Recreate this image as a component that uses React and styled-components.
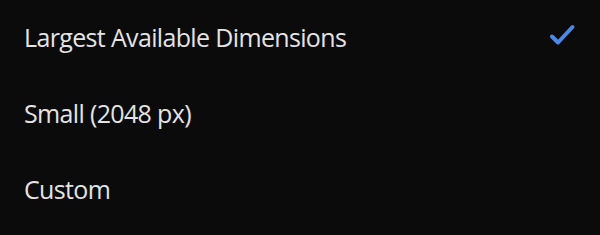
import styled, { createGlobalStyle } from "styled-components";

const Global = createGlobalStyle`
  html, body {
    margin: 0;
    padding: 0;
    background: #0b0b0b;
  }
`;

const Menu = styled.ul`
  list-style: none;
  margin: 0;
  padding: 0;
  width: 600px;
  height: 235px;
  background: #0b0b0b;
  font-family: "Open Sans", "Noto Sans", sans-serif;
`;

const Item = styled.li`
  display: flex;
  align-items: center;
  justify-content: space-between;
  height: 76px;
  padding: 0 24px 2px 24px;
  box-sizing: border-box;
  color: #e3e3e3;
  font-size: 25px;
  letter-spacing: -0.65px;
`;

const Check = styled.svg`
  width: 28px;
  height: 26px;
  color: #4a88ec;
  margin-top: -2px;
`;

const options = [
  { label: "Largest Available Dimensions", selected: true },
  { label: "Small (2048 px)" },
  { label: "Custom" },
];

function App() {
  return (
    <>
      <Global />
      <Menu>
        {options.map((o) => (
          <Item key={o.label}>
            <span>{o.label}</span>
            {o.selected && (
              <Check viewBox="0 0 28 26">
                <path
                  d="M4 13.5 L10 19.5 L24.5 4"
                  fill="none"
                  stroke="currentColor"
                  strokeWidth="4"
                  strokeLinecap="round"
                  strokeLinejoin="round"
                />
              </Check>
            )}
          </Item>
        ))}
      </Menu>
    </>
  );
}

export default App;
